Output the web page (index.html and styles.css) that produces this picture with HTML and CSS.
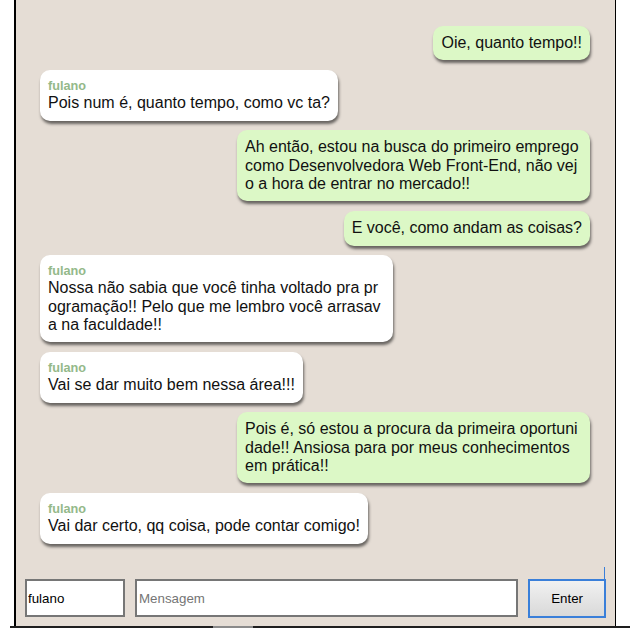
FILE: index.html
```html
<!DOCTYPE html>
<html lang="pt-BR">
<head>
<meta charset="utf-8">
<title>Chat</title>
<link rel="stylesheet" href="styles.css">
</head>
<body>
<div class="chat">
  <div class="messages">
    <div class="msg sent">Oie, quanto tempo!!</div>
    <div class="msg received"><span class="name">fulano</span>Pois num é, quanto tempo, como vc ta?</div>
    <div class="msg sent">Ah então, estou na busca do primeiro emprego como Desenvolvedora Web Front-End, não vejo a hora de entrar no mercado!!</div>
    <div class="msg sent">E você, como andam as coisas?</div>
    <div class="msg received"><span class="name">fulano</span>Nossa não sabia que você tinha voltado pra programação!! Pelo que me lembro você arrasava na faculdade!!</div>
    <div class="msg received"><span class="name">fulano</span>Vai se dar muito bem nessa área!!!</div>
    <div class="msg sent">Pois é, só estou a procura da primeira oportunidade!! Ansiosa para por meus conhecimentos em prática!!</div>
    <div class="msg received"><span class="name">fulano</span>Vai dar certo, qq coisa, pode contar comigo!</div>
  </div>
  <form class="composer">
    <input class="field user" type="text" value="fulano">
    <input class="field text" type="text" placeholder="Mensagem">
    <button class="send" type="button">Enter</button>
  </form>
</div>
<div class="baseline"><span class="seg dark1"></span><span class="seg light"></span><span class="seg dark2"></span></div>
</body>
</html>
```
FILE: styles.css
```css
html, body {
  margin: 0;
  padding: 0;
  background: #ffffff;
  font-family: "Liberation Sans", Arial, sans-serif;
}

.chat {
  margin-left: 14px;
  width: 602px;
  height: 626px;
  box-sizing: border-box;
  background: #e5ddd5;
  border-left: 2px solid #000;
  border-right: 1px solid #000;
  display: flex;
  flex-direction: column;
}

.messages {
  display: flex;
  flex-direction: column;
  gap: 9.7px;
  padding: 26px 25px 0 24px;
  flex: 1;
}

.msg {
  max-width: 353px;
  box-sizing: border-box;
  padding: 8px;
  border-radius: 10px;
  font-size: 16px;
  line-height: 18.4px;
  color: #111;
  word-break: break-all;
  box-shadow: 1px 3px 3px rgba(0, 0, 0, 0.55);
}

.sent {
  align-self: flex-end;
  background: #dcf8c6;
}

.received {
  align-self: flex-start;
  background: #ffffff;
}

.name {
  display: block;
  font-size: 12.7px;
  line-height: 16px;
  font-weight: bold;
  color: #94b98a;
}

.composer {
  display: flex;
  gap: 10px;
  padding: 0 9px 8px 9px;
  height: 39px;
}

.field {
  box-sizing: border-box;
  height: 38px;
  border: 2px solid #767676;
  background: #fff;
  font-family: "Liberation Sans", Arial, sans-serif;
  font-size: 13.33px;
  padding: 1px 2px;
  margin: 0;
  outline: none;
  color: #000;
}

.field.user {
  width: 100px;
  padding-left: 1px;
}

.field.text {
  width: 385px;
}

.field.text::placeholder {
  color: #757575;
}

.send {
  position: relative;
  box-sizing: border-box;
  width: 78px;
  height: 39px;
  margin: 0;
  border: 2px solid #3a7fd9;
  background: linear-gradient(#f1f1f1, #d9d9d9);
  font-family: "Liberation Sans", Arial, sans-serif;
  font-size: 13.33px;
  color: #000;
}

.send::before {
  content: "";
  position: absolute;
  right: -1px;
  top: -14px;
  width: 1px;
  height: 12px;
  background: #3a7fd9;
}

.baseline {
  display: flex;
  height: 2px;
  margin-left: 10px;
}

.seg {
  display: block;
  height: 2px;
}

.dark1 {
  width: 203px;
  background: #1e1e1e;
}

.light {
  width: 40px;
  background: #8a8a8a;
}

.dark2 {
  flex: 1;
  background: #1e1e1e;
}
```
